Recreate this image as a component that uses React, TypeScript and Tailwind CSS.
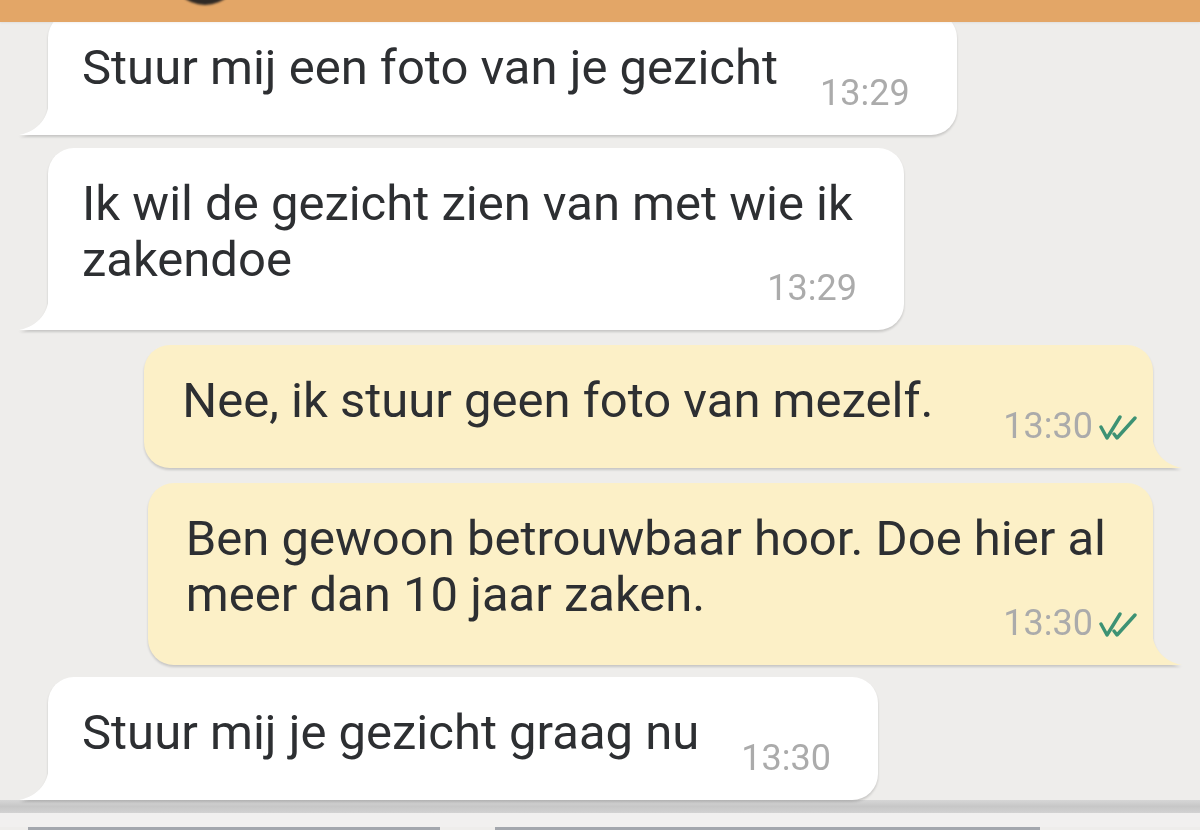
import React from 'react';

interface Msg {
  id: number;
  out: boolean;
  lines: string[];
  time: string;
  gap: string;
}

const MESSAGES: Msg[] = [
  { id: 1, out: false, lines: ['Stuur mij een foto van je gezicht'], time: '13:29', gap: 'mt-[-10px]' },
  { id: 2, out: false, lines: ['Ik wil de gezicht zien van met wie ik', 'zakendoe'], time: '13:29', gap: 'mt-[13px]' },
  { id: 3, out: true, lines: ['Nee, ik stuur geen foto van mezelf.'], time: '13:30', gap: 'mt-[15px]' },
  { id: 4, out: true, lines: ['Ben gewoon betrouwbaar hoor. Doe hier al', 'meer dan 10 jaar zaken.'], time: '13:30', gap: 'mt-[15px]' },
  { id: 5, out: false, lines: ['Stuur mij je gezicht graag nu'], time: '13:30', gap: 'mt-[12px]' },
];

function DoubleCheck() {
  return (
    <svg width="40" height="26" viewBox="0 0 40 26" className="ml-[5px]" fill="none">
      <path d="M3 13 L9 24 L22 3" stroke="#3d9274" strokeWidth="3.4" strokeLinejoin="round" strokeLinecap="round" />
      <path d="M16 20 L19 24 L37 4" stroke="#3d9274" strokeWidth="3.4" strokeLinejoin="round" strokeLinecap="round" />
    </svg>
  );
}

function Bubble({ msg }: { msg: Msg }) {
  const multi = msg.lines.length > 1;
  const { out } = msg;

  return (
    <div
      className={`relative flex w-fit pt-[28px] pb-[24px] drop-shadow-[0_2px_1px_rgba(0,0,0,0.16)] ${msg.gap} ${
        out
          ? 'self-end mr-[47px] rounded-[26px] rounded-br-none bg-[#fcf0c7] pl-[38px] pr-[15px]'
          : 'ml-[48px] rounded-[26px] rounded-bl-none bg-white pl-[34px] pr-[47px]'
      } ${multi ? 'flex-col' : 'items-end'}`}
    >
      {/* tail */}
      {out ? (
        <svg width="30" height="36" viewBox="0 0 30 36" className="absolute bottom-0 right-[-29px]">
          <path d="M0 0 C0 18 10 32 30 36 L0 36 Z" fill="#fcf0c7" />
        </svg>
      ) : (
        <svg width="30" height="36" viewBox="0 0 30 36" className="absolute bottom-0 left-[-29px]">
          <path d="M30 0 C30 18 20 32 0 36 L30 36 Z" fill="#ffffff" />
        </svg>
      )}

      <div
        className={`text-[49px] leading-[56px] text-[#2d2f32] whitespace-nowrap ${
          multi ? (out ? 'pr-[32px]' : 'pr-[4px]') : 'mb-[15px]'
        }`}
      >
        {msg.lines.map((l, i) => (
          <div key={i}>{l}</div>
        ))}
      </div>

      <div
        className={`flex items-center text-[36px] leading-[35px] text-[#ababab] ${
          multi ? 'self-end mt-[-17px]' : out ? 'ml-[70px]' : 'ml-[42px]'
        }`}
      >
        {msg.time}
        {out && <DoubleCheck />}
      </div>
    </div>
  );
}

export default function App() {
  return (
    <div className="w-[1200px] h-[830px] overflow-hidden bg-[#eeedeb] flex flex-col font-['Roboto',sans-serif]">
      {/* Top bar with avatar edge */}
      <div className="relative z-10 h-[22px] shrink-0 overflow-hidden bg-[#e3a667] shadow-[0_1px_2px_rgba(0,0,0,0.06)]">
        <div className="ml-[170px] mt-[-65px] h-[70px] w-[70px] rounded-full bg-[#2f2925] blur-[1px]" />
      </div>

      {/* Messages */}
      {MESSAGES.map((m) => (
        <Bubble key={m.id} msg={m} />
      ))}

      {/* Input area edge */}
      <div className="h-[13px] shrink-0 bg-gradient-to-b from-[#d6d6d6] via-[#c7c7c7] to-[#d2d2d2]" />
      <div className="h-[14px] shrink-0 bg-[#f1f0ef]" />
      <div className="flex h-[3px] shrink-0 gap-[55px] pl-[28px]">
        <div className="w-[412px] bg-[#a3a7ad]" />
        <div className="w-[545px] bg-[#a3a7ad]" />
      </div>
    </div>
  );
}
